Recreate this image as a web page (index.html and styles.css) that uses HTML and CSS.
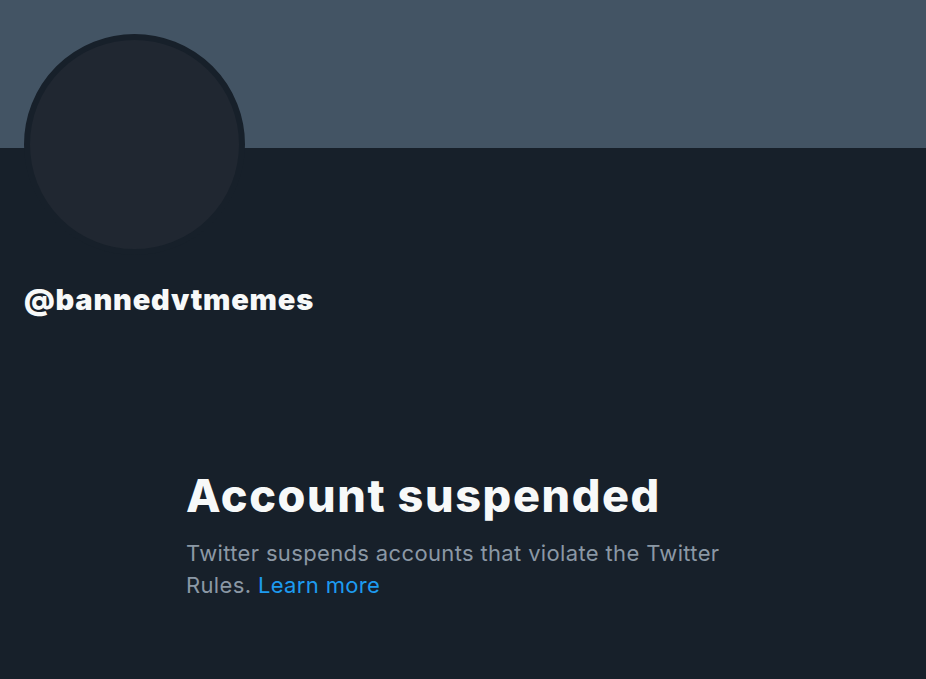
FILE: index.html
```html
<!DOCTYPE html>
<html lang="en">
<head>
<meta charset="utf-8">
<title>@bannedvtmemes</title>
<link rel="stylesheet" href="styles.css">
</head>
<body>
<div class="page">
  <div class="banner"></div>
  <div class="profile">
    <div class="avatar"></div>
    <div class="handle">@bannedvtmemes</div>
  </div>
  <div class="notice">
    <h1 class="notice-title">Account suspended</h1>
    <p class="notice-text">Twitter suspends accounts that violate the Twitter Rules. <a class="notice-link" href="#">Learn more</a></p>
  </div>
</div>
</body>
</html>
```
FILE: styles.css
```css
html, body {
  margin: 0;
  padding: 0;
  background: #17202a;
}
body {
  font-family: Inter, "Noto Sans", sans-serif;
  color: #f7f9f9;
}
.page {
  width: 926px;
  height: 679px;
  overflow: hidden;
}
.banner {
  height: 148px;
  background: #435464;
}
.profile {
  padding: 0 24px;
}
.avatar {
  width: 209px;
  height: 209px;
  border: 6px solid #17202a;
  border-radius: 50%;
  background: #202731;
  margin-top: -114px;
}
.handle {
  margin-top: 28px;
  font-size: 29px;
  line-height: 34px;
  font-weight: 900;
  letter-spacing: 0.8px;
}
.notice {
  width: 554px;
  margin: 153px auto 0;
}
.notice-title {
  margin: 0;
  font-size: 45px;
  line-height: 52px;
  font-weight: 800;
  letter-spacing: 1.6px;
}
.notice-text {
  margin: 15px 0 0;
  font-size: 22px;
  line-height: 32px;
  color: #8b98a5;
  letter-spacing: 0.35px;
}
.notice-link {
  color: #1d9bf0;
  text-decoration: none;
}
```
